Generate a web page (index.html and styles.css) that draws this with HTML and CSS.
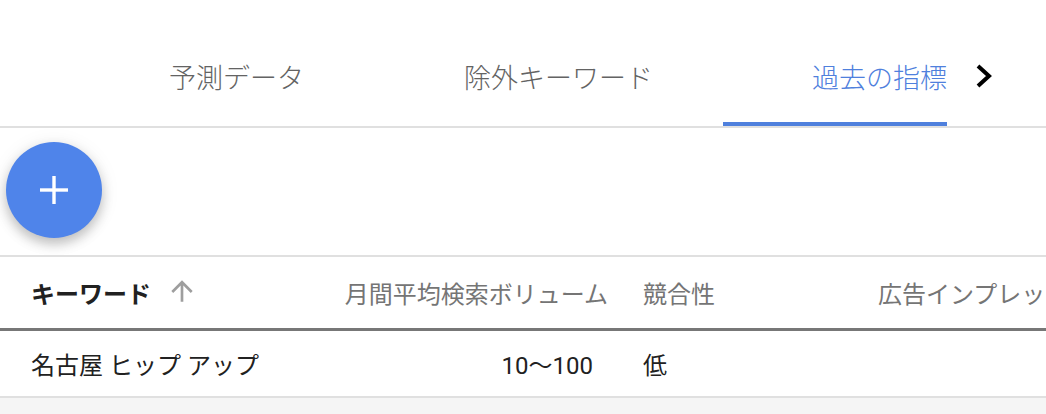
FILE: index.html
```html
<!DOCTYPE html>
<html lang="ja">
<head>
  <meta charset="UTF-8" />
  <meta name="viewport" content="width=device-width, initial-scale=1" />
  <title>キーワードプランナー</title>
  <link rel="stylesheet" href="styles.css">
</head>
<body>
  <nav class="tabs">
    <div class="tab tab-forecast">予測データ</div>
    <div class="tab tab-negative">除外キーワード</div>
    <div class="tab tab-history active">過去の指標</div>
    <button type="button" class="tab-next" aria-label="次へ">
      <svg width="20" height="26" viewBox="0 0 20 26">
        <polyline points="3,3 14,13 3,23" fill="none" stroke="#000" stroke-width="4" />
      </svg>
    </button>
  </nav>

  <section class="actions">
    <button type="button" class="fab" aria-label="追加">
      <svg width="28" height="28" viewBox="0 0 28 28">
        <rect x="12.3" y="0" width="3.4" height="28" fill="#fff" />
        <rect x="0" y="12.3" width="28" height="3.4" fill="#fff" />
      </svg>
    </button>
  </section>

  <div class="table">
    <div class="row head">
      <div class="cell col-keyword sorted">
        キーワード
        <svg class="sort-icon" width="32" height="32" viewBox="0 0 24 24">
          <path d="M4 12l1.41 1.41L11 7.83V20h2V7.83l5.58 5.59L20 12l-8-8-8 8z" fill="#9e9e9e" />
        </svg>
      </div>
      <div class="cell col-volume">月間平均検索ボリューム</div>
      <div class="cell col-competition">競合性</div>
      <div class="cell col-impr">広告インプレッション シェア</div>
    </div>
    <div class="row data">
      <div class="cell col-keyword">名古屋 ヒップ アップ</div>
      <div class="cell col-volume">10〜100</div>
      <div class="cell col-competition">低</div>
      <div class="cell col-impr"></div>
    </div>
  </div>
</body>
</html>
```

FILE: styles.css
```css
body {
  margin: 0;
  background: #f5f5f5;
  color: #212121;
  font-family: Roboto, "Noto Sans CJK JP", sans-serif;
  overflow: hidden;
}

/* Tabs */
.tabs {
  display: flex;
  align-items: stretch;
  height: 126px;
  padding-left: 169px;
  background: #fff;
  border-bottom: 2px solid #e0e0e0;
}

.tab {
  display: flex;
  align-items: center;
  padding-top: 26px;
  box-sizing: border-box;
  font-size: 27px;
  font-weight: 300;
  color: #636363;
  white-space: nowrap;
}

.tab-forecast { width: 295px; }
.tab-negative { width: 259px; }

.tab-history {
  width: 224px;
  justify-content: flex-end;
}

.tab.active {
  color: #4f80dd;
  border-bottom: 4px solid #4f80dd;
  padding-top: 30px;
}

.tab-next {
  display: flex;
  align-items: center;
  padding: 26px 0 0 28px;
  border: none;
  background: none;
}

/* Add button */
.actions {
  height: 129px;
  background: #fff;
  border-bottom: 2px solid #e0e0e0;
  padding: 14px 0 0 6px;
  box-sizing: border-box;
}

.fab {
  width: 96px;
  height: 96px;
  border-radius: 50%;
  border: none;
  background: #4f84ea;
  display: flex;
  align-items: center;
  justify-content: center;
  box-shadow: 0 6px 12px rgba(0,0,0,0.22), 0 2px 20px rgba(0,0,0,0.08);
  cursor: pointer;
}

/* Table */
.table {
  background: #fff;
}

.row {
  display: grid;
  grid-template-columns: 330px 288px 235px 1fr;
  align-items: center;
  font-size: 24px;
}

.row.head {
  height: 71px;
  border-bottom: 3px solid #777;
  color: #757575;
}

.row.data {
  height: 65px;
  border-bottom: 2px solid #e0e0e0;
  color: #212121;
}

.cell {
  white-space: nowrap;
  overflow: hidden;
}

.col-keyword {
  padding-left: 31px;
  display: flex;
  align-items: center;
}

.head .sorted {
  font-weight: bold;
  color: #212121;
}

.sort-icon {
  margin-left: 15px;
  margin-top: -4px;
}

.col-volume {
  text-align: right;
  padding-right: 10px;
}

.data .col-volume {
  padding-right: 25px;
}

.col-competition,
.col-impr {
  padding-left: 25px;
}
```
